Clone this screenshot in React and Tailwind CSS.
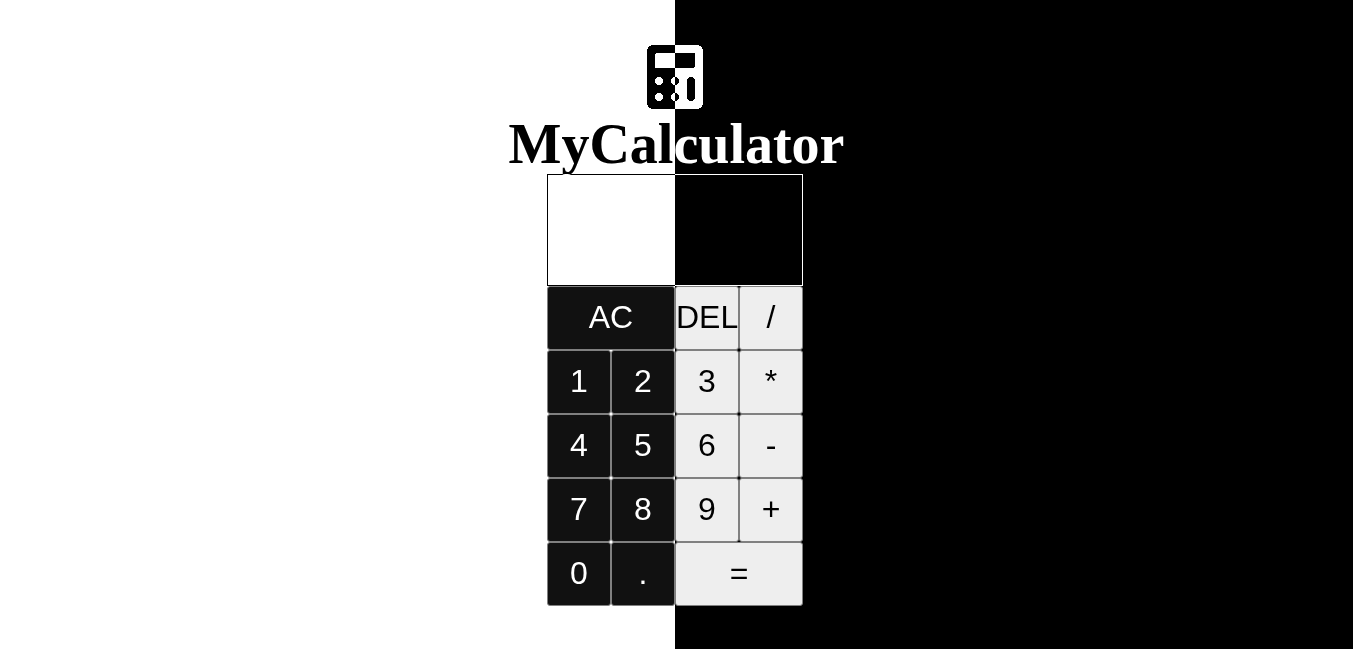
const buttons = [
  { label: "AC", dark: true, wide: true },
  { label: "DEL" },
  { label: "/" },
  { label: "1", dark: true },
  { label: "2", dark: true },
  { label: "3" },
  { label: "*" },
  { label: "4", dark: true },
  { label: "5", dark: true },
  { label: "6" },
  { label: "-" },
  { label: "7", dark: true },
  { label: "8", dark: true },
  { label: "9" },
  { label: "+" },
  { label: "0", dark: true },
  { label: ".", dark: true },
  { label: "=", wide: true },
];

function CalculatorIcon() {
  return (
    <svg viewBox="0 0 56 64" shapeRendering="crispEdges" className="block h-16 w-14 fill-white" aria-hidden="true">
      <path
        fillRule="evenodd"
        d="M6 0h44a6 6 0 0 1 6 6v52a6 6 0 0 1-6 6H6a6 6 0 0 1-6-6V6a6 6 0 0 1 6-6zM10 8a2 2 0 0 0-2 2v11a2 2 0 0 0 2 2h36a2 2 0 0 0 2-2V10a2 2 0 0 0-2-2zM12 32a4 4 0 1 0 0 8a4 4 0 1 0 0-8zM28 32a4 4 0 1 0 0 8a4 4 0 1 0 0-8zM12 48a4 4 0 1 0 0 8a4 4 0 1 0 0-8zM28 48a4 4 0 1 0 0 8a4 4 0 1 0 0-8zM44 32a4 4 0 0 0-4 4v16a4 4 0 0 0 8 0V36a4 4 0 0 0-4-4z"
      />
    </svg>
  );
}

export default function App() {
  return (
    <div className="min-h-screen isolate bg-[linear-gradient(to_right,#fff_675px,#000_675px)]">
      <div className="flex w-[1350px] flex-col items-center pt-[45px]">
        <div className="mix-blend-difference">
          <CalculatorIcon />
        </div>
        <h1 className="ml-[3px] h-[65px] text-[56px] leading-[70px] font-bold text-white mix-blend-difference font-['Liberation_Serif',serif]">
          MyCalculator
        </h1>
        <div className="h-[112px] w-64 border border-white mix-blend-difference"></div>
        <div className="grid w-64 grid-cols-4 font-['Liberation_Sans',sans-serif]">
          {buttons.map((b) => (
            <button
              key={b.label}
              className={`h-16 rounded-[3px] border border-[#808080] p-0 pb-[2px] text-[32px] ${
                b.wide ? "col-span-2" : ""
              } ${b.dark ? "bg-[#111] text-white" : "bg-[#eee] text-black"}`}
            >
              {b.label}
            </button>
          ))}
        </div>
      </div>
    </div>
  );
}
